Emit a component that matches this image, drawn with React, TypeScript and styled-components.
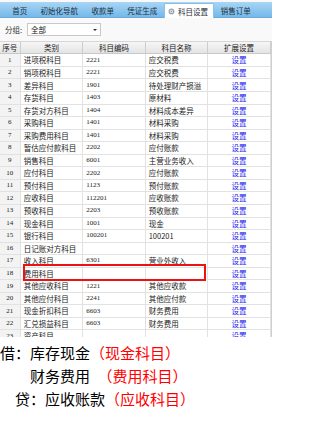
import React, { FC } from 'react'
import styled, { createGlobalStyle } from 'styled-components'

const GlobalStyle = createGlobalStyle`
	html, body {
		margin: 0;
		padding: 0;
		background: #fff;
	}
`

const cjk = `"Noto Sans CJK SC", "Noto Sans", sans-serif`

interface Subject {
	name: string
	code: string
	account: string
}

const subjects: Subject[] = [
	{ name: '进项税科目', code: '2221', account: '应交税费' },
	{ name: '销项税科目', code: '2221', account: '应交税费' },
	{ name: '差异科目', code: '1901', account: '待处理财产损溢' },
	{ name: '存货科目', code: '1403', account: '原材料' },
	{ name: '存货对方科目', code: '1404', account: '材料成本差异' },
	{ name: '采购科目', code: '1401', account: '材料采购' },
	{ name: '采购费用科目', code: '1401', account: '材料采购' },
	{ name: '暂估应付款科目', code: '2202', account: '应付账款' },
	{ name: '销售科目', code: '6001', account: '主营业务收入' },
	{ name: '应付科目', code: '2202', account: '应付账款' },
	{ name: '预付科目', code: '1123', account: '预付账款' },
	{ name: '应收科目', code: '112201', account: '应收账款' },
	{ name: '预收科目', code: '2203', account: '预收账款' },
	{ name: '现金科目', code: '1001', account: '现金' },
	{ name: '银行科目', code: '100201', account: '100201' },
	{ name: '日记账对方科目', code: '', account: '' },
	{ name: '收入科目', code: '6301', account: '营业外收入' },
	{ name: '费用科目', code: '', account: '' },
	{ name: '其他应收科目', code: '1221', account: '其他应收款' },
	{ name: '其他应付科目', code: '2241', account: '其他应付款' },
	{ name: '现金折扣科目', code: '6603', account: '财务费用' },
	{ name: '汇兑损益科目', code: '6603', account: '财务费用' },
	{ name: '资产科目', code: '', account: '' },
]

const tabs = ['首页', '初始化导航', '收款单', '凭证生成', '科目设置', '销售订单']
const activeTab = '科目设置'

const Page = styled.div`
	width: 309px;
	font-family: ${cjk};
`

const Shot = styled.div`
	width: 272px;
	background: #f9f9f9;
	padding-top: 2px;
`

const TabBar = styled.div`
	height: 16px;
	display: flex;
	align-items: flex-end;
	padding-left: 5.5px;
	background: linear-gradient(#a9d5f4, #74b9eb);
	border-bottom: 1px solid #6aa9d8;
	box-sizing: border-box;
`

const Tab = styled.div<{ $active?: boolean }>`
	height: ${p => (p.$active ? '15px' : '14px')};
	display: flex;
	align-items: center;
	gap: 3px;
	padding: ${p => (p.$active ? '0 5px 0 3px' : '0 6.7px')};
	margin-bottom: ${p => (p.$active ? '-1px' : '0')};
	font-size: 7.5px;
	color: #1f2d3a;
	background: ${p => (p.$active ? '#fff' : 'transparent')};
	border: ${p => (p.$active ? '1px solid #8fc0e4' : 'none')};
	border-bottom: none;
	box-sizing: border-box;
	white-space: nowrap;
`

const TabIcon = styled.svg`
	width: 7px;
	height: 7px;
	display: block;
`

const FilterRow = styled.div`
	height: 23px;
	display: flex;
	align-items: center;
	gap: 5px;
	padding-left: 5px;
	font-size: 7.5px;
	color: #333;
`

const Select = styled.div`
	width: 74px;
	height: 13px;
	box-sizing: border-box;
	display: flex;
	align-items: center;
	justify-content: space-between;
	padding: 0 3px 0 3px;
	background: #fff;
	border: 1px solid #c8c8c8;
	font-size: 7.5px;
	color: #111;
`

const Arrow = styled.span`
	width: 0;
	height: 0;
	border-left: 2px solid transparent;
	border-right: 2px solid transparent;
	border-top: 2.5px solid #333;
`

const Grid = styled.div`
	position: relative;
	height: 296px;
	overflow: hidden;
	background: #fff;
	border-right: 1px solid #cfcfcf;
`

const Row = styled.div<{ $head?: boolean }>`
	display: grid;
	grid-template-columns: 20.7px 62.6px 62.4px 62.6px 62.7px;
	height: ${p => (p.$head ? '13.4px' : '12.55px')};
	box-sizing: border-box;
	border-bottom: 1px solid ${p => (p.$head ? '#c9c9c9' : '#e2e2e2')};
	background: ${p => (p.$head ? 'linear-gradient(#f6f6f6, #e4e4e4)' : '#fff')};
	border-top: ${p => (p.$head ? '1px solid #d6d6d6' : 'none')};
`

const Cell = styled.div<{ $align?: 'left' | 'center'; $index?: boolean; $num?: boolean; $head?: boolean }>`
	display: flex;
	align-items: center;
	justify-content: ${p => (p.$align === 'center' ? 'center' : 'flex-start')};
	padding-left: ${p => (p.$align === 'center' ? '0' : '3px')};
	border-right: 1px solid ${p => (p.$head ? '#cdcdcd' : '#e2e2e2')};
	background: ${p => (p.$index && !p.$head ? '#f3f3f3' : 'transparent')};
	font-family: ${p => (p.$num ? `"Liberation Serif", ${cjk}` : cjk)};
	font-size: ${p => (p.$num ? '7px' : '7.5px')};
	color: #222;
	white-space: nowrap;
	overflow: hidden;
	line-height: 1;
`

const Link = styled.span`
	color: #2323f0;
	font-size: 7.5px;
`

const Highlight = styled.div`
	position: absolute;
	left: 22.7px;
	top: 223.3px;
	width: 183px;
	height: 16.4px;
	border: 2px solid #ee1111;
	box-sizing: border-box;
	pointer-events: none;
`

const Notes = styled.div`
	padding-top: 3.5px;
	font-size: 15px;
	line-height: 23px;
	color: #000;
	white-space: nowrap;
`

const NoteLine = styled.div<{ $indent: number }>`
	padding-left: ${p => p.$indent}px;
`

const Red = styled.span`
	color: #ff0000;
`

const GearIcon: FC = () => (
	<TabIcon viewBox='0 0 10 10'>
		<circle cx='5' cy='5' r='4.2' fill='#9aa7b4' />
		<circle cx='5' cy='5' r='2.2' fill='#fff' />
		<circle cx='5' cy='5' r='1.2' fill='#7d8b99' />
	</TabIcon>
)

const App: FC = () => (
	<Page>
		<GlobalStyle />
		<Shot>
			<TabBar>
				{tabs.map(t => (
					<Tab key={t} $active={t === activeTab}>
						{t === activeTab && <GearIcon />}
						{t}
					</Tab>
				))}
			</TabBar>
			<FilterRow>
				<span>分组:</span>
				<Select>
					<span>全部</span>
					<Arrow />
				</Select>
			</FilterRow>
			<Grid>
				<Row $head>
					<Cell $head $index $align='center'>序号</Cell>
					<Cell $head $align='center'>类别</Cell>
					<Cell $head $align='center'>科目编码</Cell>
					<Cell $head $align='center'>科目名称</Cell>
					<Cell $head $align='center'>扩展设置</Cell>
				</Row>
				{subjects.map((s, i) => (
					<Row key={s.name}>
						<Cell $index $num $align='center'>{i + 1}</Cell>
						<Cell>{s.name}</Cell>
						<Cell $num>{s.code}</Cell>
						<Cell>{s.account}</Cell>
						<Cell $align='center'>
							<Link>设置</Link>
						</Cell>
					</Row>
				))}
				<Highlight />
			</Grid>
		</Shot>
		<Notes>
			<NoteLine $indent={0}>
				借：库存现金<Red>（现金科目）</Red>
			</NoteLine>
			<NoteLine $indent={30}>
				财务费用{'\u2002'}<Red>（费用科目）</Red>
			</NoteLine>
			<NoteLine $indent={15}>
				贷：应收账款<Red>（应收科目）</Red>
			</NoteLine>
		</Notes>
	</Page>
)

export default App
